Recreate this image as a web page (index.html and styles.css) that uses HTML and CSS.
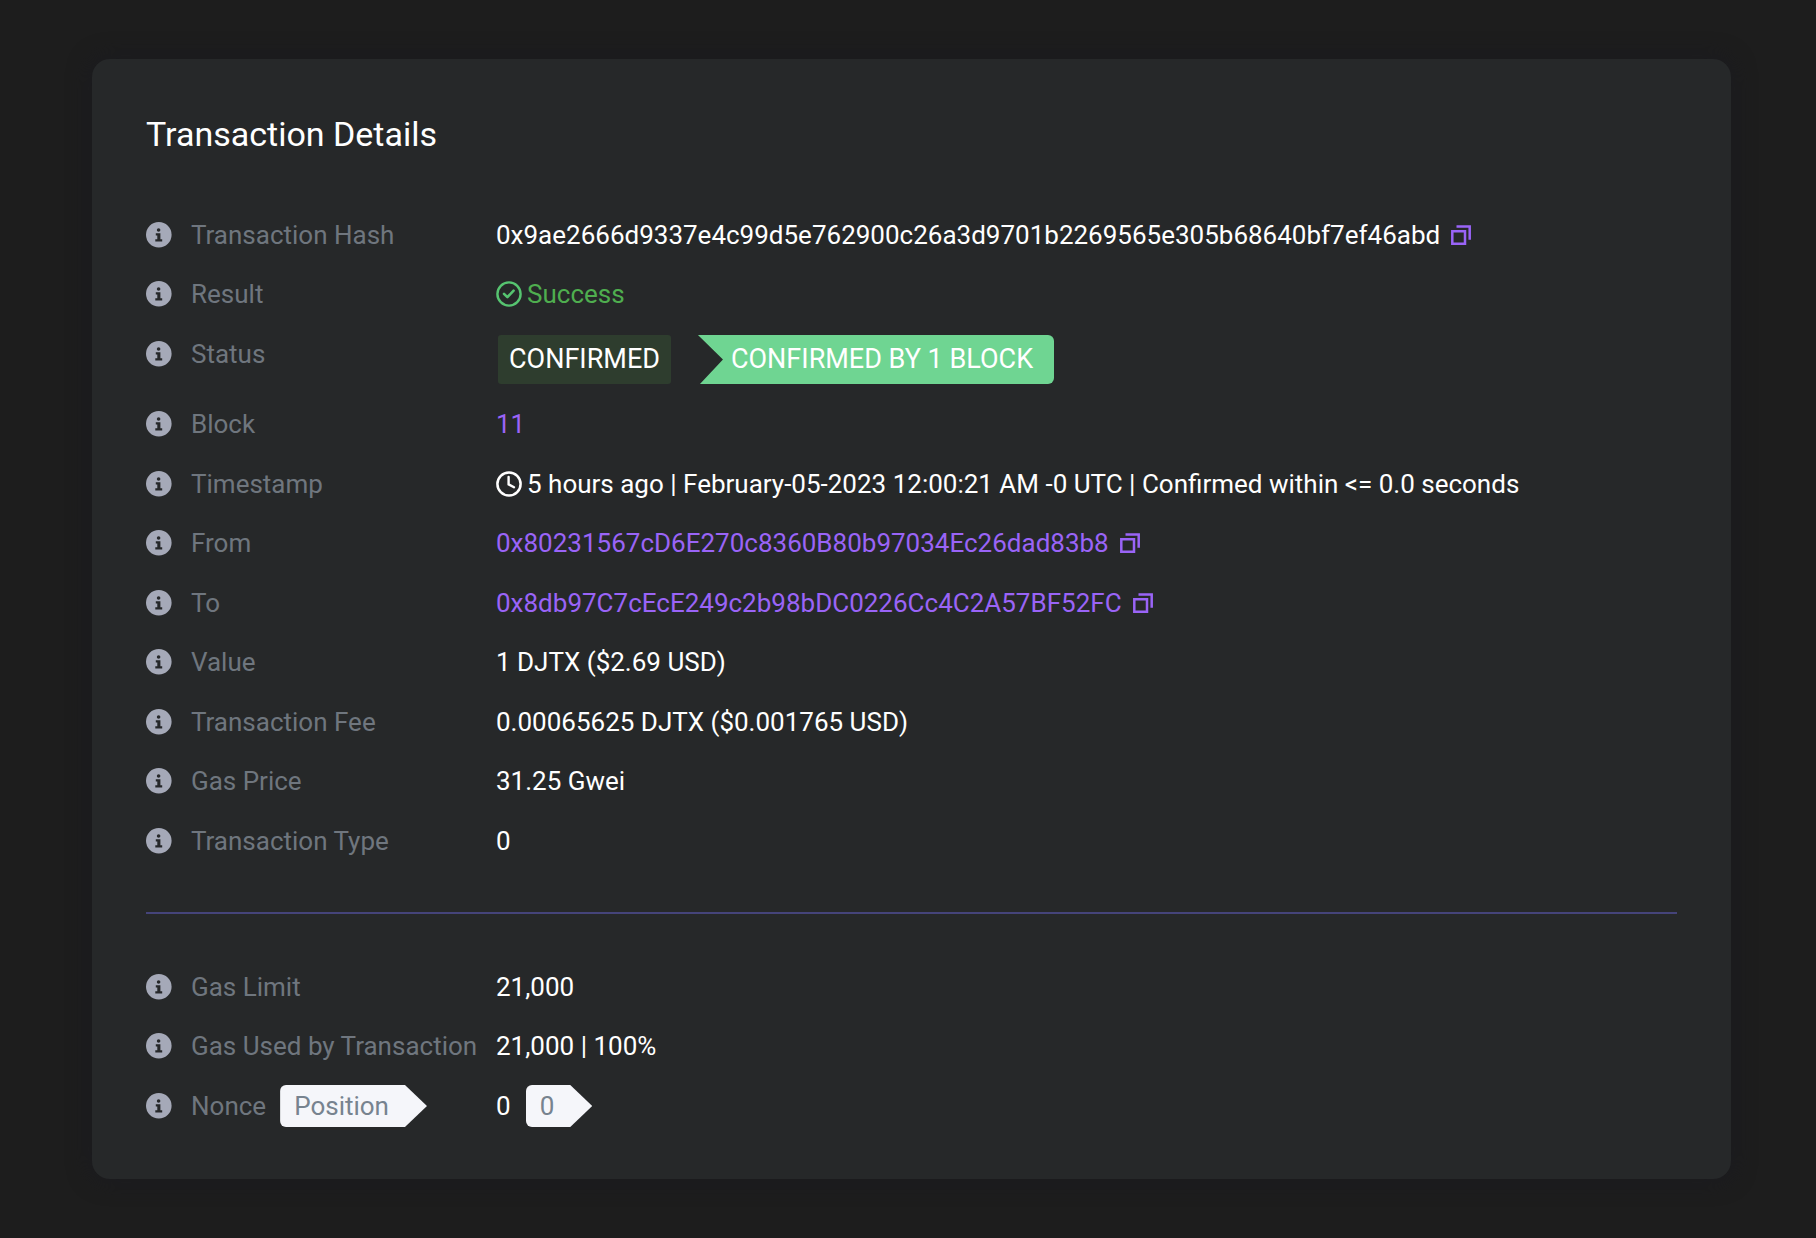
FILE: index.html
```html
<!DOCTYPE html>
<html lang="en">
<head>
<meta charset="utf-8">
<meta name="viewport" content="width=device-width, initial-scale=1">
<title>Transaction Details</title>
<link rel="stylesheet" href="styles.css">
</head>
<body>
<svg class="sprite" aria-hidden="true">
  <symbol id="info" viewBox="0 0 26 26">
    <circle cx="12.8" cy="12.8" r="12.8" fill="#a5a9b8"/>
    <circle cx="12.6" cy="8" r="1.8" fill="#26282a"/>
    <path d="M9.8 11.3h4.6v5.9h1.8v2.2H9.3v-2.2h2v-3.7H9.8z" fill="#26282a"/>
  </symbol>
  <symbol id="copy" viewBox="0 0 20 20">
    <path d="M1.3 6.3h12.7v12.4H1.3zM5.5 1.5h13.2v13.2" fill="none" stroke="currentColor" stroke-width="2.5"/>
  </symbol>
  <symbol id="check" viewBox="0 0 26 26">
    <circle cx="13" cy="13" r="11.6" fill="none" stroke="currentColor" stroke-width="2.4"/>
    <path d="M8 12.8l3.4 3.4 6.2-6.6" fill="none" stroke="currentColor" stroke-width="2.6" stroke-linecap="round" stroke-linejoin="round"/>
  </symbol>
  <symbol id="clock" viewBox="0 0 26 26">
    <circle cx="13" cy="13" r="11.6" fill="none" stroke="currentColor" stroke-width="2.5"/>
    <path d="M12.6 6v7.4l5.4 2.8" fill="none" stroke="currentColor" stroke-width="2.4" stroke-linecap="round" stroke-linejoin="round"/>
  </symbol>
</svg>
<main class="card">
  <h1 class="title">Transaction Details</h1>
  <dl class="details">
    <div class="row"><dt class="label"><svg class="icon"><use href="#info"/></svg>Transaction Hash</dt>
      <dd class="value copyable">0x9ae2666d9337e4c99d5e762900c26a3d9701b2269565e305b68640bf7ef46abd<button class="copy" type="button" aria-label="Copy hash"><svg class="copy-icon"><use href="#copy"/></svg></button></dd></div>
    <div class="row"><dt class="label"><svg class="icon"><use href="#info"/></svg>Result</dt>
      <dd class="value success"><svg class="icon success-icon"><use href="#check"/></svg>Success</dd></div>
    <div class="row"><dt class="label"><svg class="icon"><use href="#info"/></svg>Status</dt>
      <dd class="value badges"><span class="badge">CONFIRMED</span><span class="ribbon">CONFIRMED BY 1 BLOCK</span></dd></div>
    <div class="row"><dt class="label"><svg class="icon"><use href="#info"/></svg>Block</dt>
      <dd class="value"><a class="link" href="#">11</a></dd></div>
    <div class="row"><dt class="label"><svg class="icon"><use href="#info"/></svg>Timestamp</dt>
      <dd class="value"><svg class="icon"><use href="#clock"/></svg>5 hours ago | February-05-2023 12:00:21 AM -0 UTC | Confirmed within &lt;= 0.0 seconds</dd></div>
    <div class="row"><dt class="label"><svg class="icon"><use href="#info"/></svg>From</dt>
      <dd class="value copyable"><a class="link" href="#">0x80231567cD6E270c8360B80b97034Ec26dad83b8</a><button class="copy" type="button" aria-label="Copy sender address"><svg class="copy-icon"><use href="#copy"/></svg></button></dd></div>
    <div class="row"><dt class="label"><svg class="icon"><use href="#info"/></svg>To</dt>
      <dd class="value copyable"><a class="link" href="#">0x8db97C7cEcE249c2b98bDC0226Cc4C2A57BF52FC</a><button class="copy" type="button" aria-label="Copy recipient address"><svg class="copy-icon"><use href="#copy"/></svg></button></dd></div>
    <div class="row"><dt class="label"><svg class="icon"><use href="#info"/></svg>Value</dt>
      <dd class="value">1 DJTX ($2.69 USD)</dd></div>
    <div class="row"><dt class="label"><svg class="icon"><use href="#info"/></svg>Transaction Fee</dt>
      <dd class="value">0.00065625 DJTX ($0.001765 USD)</dd></div>
    <div class="row"><dt class="label"><svg class="icon"><use href="#info"/></svg>Gas Price</dt>
      <dd class="value">31.25 Gwei</dd></div>
    <div class="row"><dt class="label"><svg class="icon"><use href="#info"/></svg>Transaction Type</dt>
      <dd class="value">0</dd></div>
  </dl>
  <hr class="divider">
  <dl class="details">
    <div class="row"><dt class="label"><svg class="icon"><use href="#info"/></svg>Gas Limit</dt>
      <dd class="value">21,000</dd></div>
    <div class="row"><dt class="label"><svg class="icon"><use href="#info"/></svg>Gas Used by Transaction</dt>
      <dd class="value">21,000 | 100%</dd></div>
    <div class="row"><dt class="label"><svg class="icon"><use href="#info"/></svg>Nonce<span class="tag tag-label">Position</span></dt>
      <dd class="value">0<span class="tag tag-value">0</span></dd></div>
  </dl>
</main>
</body>
</html>
```

FILE: styles.css
```css
* {
  box-sizing: border-box;
}

body {
  margin: 0;
  padding: 59px 85px 59px 92px;
  background: #1d1d1d;
  color: #fff;
  font: 26px/38px Roboto, "Liberation Sans", sans-serif;
}

.sprite {
  display: none;
}

.card {
  padding: 55px 54px 54px;
  border-radius: 18px;
  background: #262829;
  box-shadow: 0 0 20px 4px #1b1b1f;
}

.title {
  margin: 0 0 62px;
  font-size: 34px;
  font-weight: 400;
  line-height: 40px;
}

.details {
  display: flex;
  flex-direction: column;
  gap: 21px;
  margin: 0;
}

.row {
  display: grid;
  grid-template-columns: 350px 1fr;
  align-items: start;
  min-height: 38px;
}

.row:nth-child(even) {
  min-height: 39px;
}

.label,
.value {
  display: flex;
  align-items: center;
  margin: 0;
  white-space: nowrap;
}

.label {
  color: #6f767e;
}

.label .icon {
  margin-right: 19px;
}

.value {
  gap: 5px;
}

.icon {
  flex: none;
  width: 26px;
  height: 26px;
}

.copyable {
  gap: 11px;
}

.copy {
  display: flex;
  padding: 0;
  border: 0;
  background: none;
  color: #9a64f7;
  cursor: pointer;
}

.copy-icon {
  width: 20px;
  height: 20px;
}

.link {
  color: #9a64f7;
  text-decoration: none;
}

.success {
  color: #4fae4f;
}

.success-icon {
  color: #56c470;
}

.badges {
  gap: 27px;
  font-size: 27px;
}

.badge {
  margin-left: 2px;
  padding: 0 11px;
  border-radius: 3px;
  background: #2e3d2e;
  line-height: 49px;
}

.ribbon {
  padding: 0 21px 0 33px;
  border-radius: 0 6px 6px 0;
  background: #6fd592;
  clip-path: polygon(0 0, 100% 0, 100% 100%, 2px 100%, 25px 50%);
  line-height: 49px;
}

.divider {
  height: 2px;
  margin: 52px 0 54px;
  border: 0;
  background: #45447a;
}

.tag {
  margin: -2px 0;
  padding: 0 38px 0 14px;
  border-radius: 6px 0 0 6px;
  background: #f5f6fa;
  clip-path: polygon(0 0, calc(100% - 22px) 0, 100% 50%, calc(100% - 22px) 100%, 0 100%);
  color: #77838f;
  line-height: 42px;
}

.tag-label {
  margin-left: 14px;
}

.tag-value {
  margin-left: 10px;
}
```
